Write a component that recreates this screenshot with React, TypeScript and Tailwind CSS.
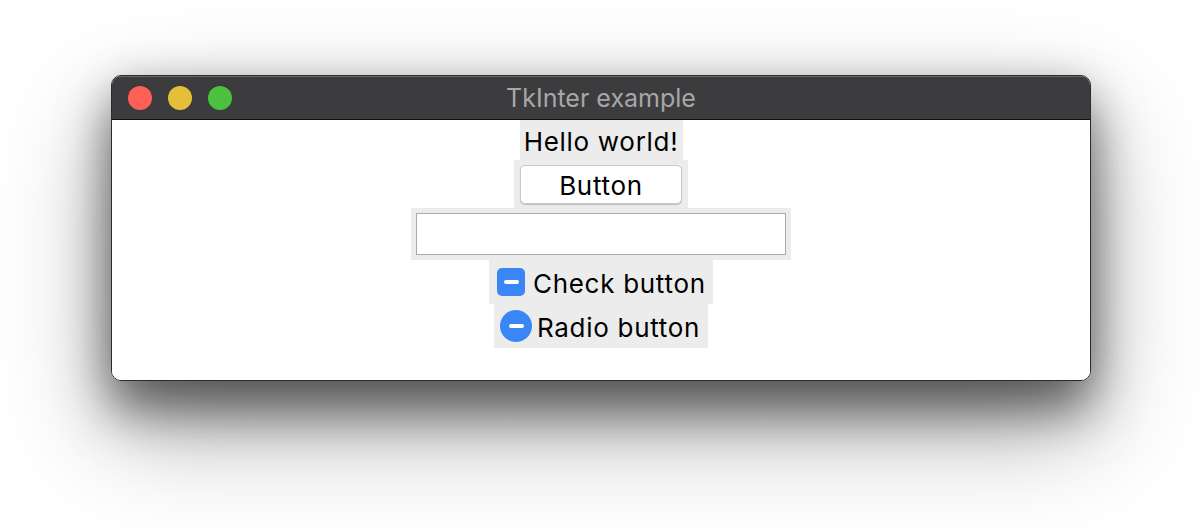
import React from "react";

const font = { fontFamily: "Inter, 'Liberation Sans', sans-serif" };

export default function App() {
  return (
    <div className="w-[1202px] h-[528px] bg-white flex pl-[111px] pt-[75px]" style={font}>
      <div className="w-[980px] h-[306px] rounded-[10px] border border-[#2b2b2b] overflow-hidden flex flex-col shadow-[0_30px_50px_rgba(0,0,0,0.5),0_45px_110px_rgba(0,0,0,0.35),0_0_40px_rgba(0,0,0,0.1)]">
        {/* Title bar */}
        <div className="relative h-[44px] shrink-0 bg-[#3c3c3e] border-t border-[#6a6a6c] border-b border-b-[#111] flex items-center">
          <div className="flex items-center gap-[16px] pl-[16px]">
            <div className="w-[24px] h-[24px] rounded-full bg-[#fe5f57]" />
            <div className="w-[24px] h-[24px] rounded-full bg-[#e6bf3a]" />
            <div className="w-[24px] h-[24px] rounded-full bg-[#4cc13f]" />
          </div>
          <div className="absolute inset-0 flex items-center justify-center text-[25px] text-[#a7a7a7] pointer-events-none pt-[2px]">
            TkInter example
          </div>
        </div>
        {/* Body */}
        <div className="flex-1 bg-white flex flex-col items-center text-[26px] tracking-[0.7px] text-black leading-none">
          <div className="w-[163px] h-[40px] bg-[#ececec] flex items-center justify-center pt-[3px]">
            Hello world!
          </div>
          <div className="w-[174px] h-[48px] bg-[#ececec] flex justify-center pt-[5px]">
            <div className="w-[162px] h-[39px] bg-white rounded-[5px] border border-[#c9c9c9] shadow-[0_1px_1px_rgba(0,0,0,0.2)] flex items-center justify-center pt-[2px]">
              Button
            </div>
          </div>
          <div className="w-[380px] h-[52px] bg-[#ececec] p-[5px]">
            <div className="w-full h-full bg-white border border-[#a9a9a9]" />
          </div>
          <div className="w-[224px] h-[44px] bg-[#ececec] flex items-center pl-[8px] gap-[8px]">
            <div className="w-[28px] h-[28px] rounded-[5px] bg-[#3a86f6] flex items-center justify-center">
              <div className="w-[15px] h-[4px] rounded-full bg-white" />
            </div>
            <span className="pt-[3px]">Check button</span>
          </div>
          <div className="w-[214px] h-[44px] bg-[#ececec] flex items-center pl-[6px] gap-[5px]">
            <div className="w-[32px] h-[32px] rounded-full bg-[#3a86f6] flex items-center justify-center">
              <div className="w-[15px] h-[4px] rounded-full bg-white" />
            </div>
            <span className="pt-[3px]">Radio button</span>
          </div>
        </div>
      </div>
    </div>
  );
}
